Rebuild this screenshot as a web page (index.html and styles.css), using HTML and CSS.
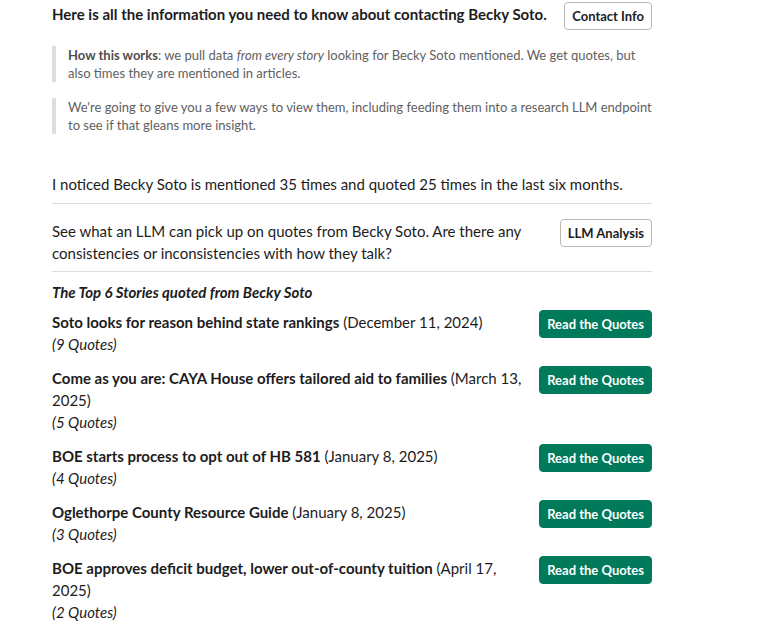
FILE: index.html
```html
<!DOCTYPE html>
<html>
<head>
<meta charset="utf-8">
<link rel="stylesheet" href="styles.css">
</head>
<body>
<div class="msg">
  <div class="section head">
    <div class="text"><b>Here is all the information you need to know about contacting Becky Soto.</b></div>
    <button class="btn">Contact Info</button>
  </div>
  <blockquote class="quote q1"><b>How this works</b>: we pull data <i>from every story</i> looking for Becky Soto mentioned. We get quotes, but also times they are mentioned in articles.</blockquote>
  <blockquote class="quote q2">We're going to give you a few ways to view them, including feeding them into a research LLM endpoint to see if that gleans more insight.</blockquote>
  <div class="plain noticed">I noticed Becky Soto is mentioned 35 times and quoted 25 times in the last six months.</div>
  <hr class="divider d1">
  <div class="section llm">
    <div class="text">See what an LLM can pick up on quotes from Becky Soto. Are there any consistencies or inconsistencies with how they talk?</div>
    <button class="btn">LLM Analysis</button>
  </div>
  <hr class="divider d2">
  <div class="plain title"><b><i>The Top 6 Stories quoted from Becky Soto</i></b></div>
  <div class="stories">
    <div class="section story">
      <div class="text"><b>Soto looks for reason behind state rankings</b> (December 11, 2024)<br><i>(9 Quotes)</i></div>
      <button class="btn primary">Read the Quotes</button>
    </div>
    <div class="section story">
      <div class="text"><b>Come as you are: CAYA House offers tailored aid to families</b> (March 13, 2025)<br><i>(5 Quotes)</i></div>
      <button class="btn primary">Read the Quotes</button>
    </div>
    <div class="section story">
      <div class="text"><b>BOE starts process to opt out of HB 581</b> (January 8, 2025)<br><i>(4 Quotes)</i></div>
      <button class="btn primary">Read the Quotes</button>
    </div>
    <div class="section story">
      <div class="text"><b>Oglethorpe County Resource Guide</b> (January 8, 2025)<br><i>(3 Quotes)</i></div>
      <button class="btn primary">Read the Quotes</button>
    </div>
    <div class="section story">
      <div class="text"><b>BOE approves deficit budget, lower out-of-county tuition</b> (April 17, 2025)<br><i>(2 Quotes)</i></div>
      <button class="btn primary">Read the Quotes</button>
    </div>
  </div>
</div>
</body>
</html>
```
FILE: styles.css
```css
* { box-sizing: border-box; }
html, body {
  margin: 0;
  padding: 0;
  background: #ffffff;
}
body {
  font-family: Lato, "Liberation Sans", sans-serif;
  color: #1d1c1d;
  font-size: 15px;
  line-height: 22px;
}
b { font-weight: 700; }
.msg {
  width: 600px;
  margin-left: 52px;
  padding-top: 2px;
}
.section {
  display: flex;
  align-items: flex-start;
  justify-content: space-between;
}
.section .text {
  flex: 1;
  padding-top: 1px;
  padding-right: 8px;
}
.story .text { padding-right: 14px; }
.btn {
  flex: none;
  height: 28px;
  padding: 0 7px;
  border: 1px solid #b8b8b8;
  border-radius: 4px;
  background: #ffffff;
  color: #1d1c1d;
  font-family: Lato, "Liberation Sans", sans-serif;
  font-size: 13px;
  font-weight: 700;
  line-height: 26px;
  white-space: nowrap;
}
.btn.primary {
  background: #007a5a;
  border-color: #007a5a;
  color: #ffffff;
}
.quote {
  margin: 0 -5px 0 0;
  padding-left: 12px;
  border-left: 4px solid #dddddd;
  color: #616061;
  font-size: 13px;
  line-height: 18px;
}
.quote b { color: #4f4e4f; }
.q1 { margin-top: 16px; }
.q2 { margin-top: 16px; }
.noticed { margin-top: 39px; }
.divider {
  border: 0;
  height: 1px;
  background: #dddddd;
  margin: 0;
}
.d1 { margin-top: 8px; }
.llm { margin-top: 15px; }
.d2 { margin-top: 7px; }
.title { margin-top: 9px; }
.stories {
  display: flex;
  flex-direction: column;
  gap: 11px;
  margin-top: 7px;
}
```
